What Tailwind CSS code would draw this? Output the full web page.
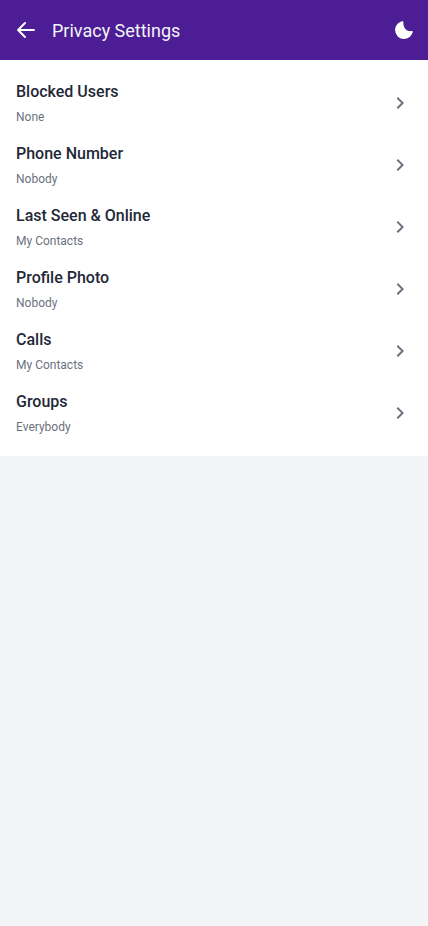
<!DOCTYPE html>
<html lang="en">
<head>
<meta charset="utf-8">
<meta name="viewport" content="width=device-width, initial-scale=1">
<title>Privacy Settings</title>
<script src="https://cdn.jsdelivr.net/npm/@tailwindcss/browser@4"></script>
</head>
<body class="min-h-screen bg-[#f3f4f6] font-['Roboto',sans-serif]">
<header class="flex h-[60px] items-center justify-between bg-[#4c1d95] pl-3.5 pr-3 text-white">
  <div class="flex items-center gap-3.5">
    <button aria-label="Back"><svg class="size-6" viewBox="0 0 24 24" fill="none" stroke="currentColor" stroke-width="2" stroke-linecap="round" stroke-linejoin="round"><path d="M20 12H4M11 5l-7 7 7 7"/></svg></button>
    <h1 class="pt-0.5 text-lg text-[#f3f4f6]">Privacy Settings</h1>
  </div>
  <button aria-label="Dark mode"><svg class="size-6" viewBox="0 0 24 24" fill="currentColor"><path d="M10.200 3.250C6 4.150 3.100 7.800 3.100 12.100a8.900 8.900 0 0 0 8.900 8.900c4.200 0 7.700-2.800 8.700-6.900.150-.700-.350-1.150-1-1-2.200.400-4.200-.100-5.800-1.600-1.900-1.800-2.800-4.300-2.500-7.200.100-.700-.400-1.200-1.200-1.050z"/></svg></button>
</header>
<main class="bg-white pt-3 pb-3">
  <ul>
    <li class="flex h-[62px] items-center justify-between px-4"><div class="pb-px"><h2 class="text-base font-medium text-[#1f2937]">Blocked Users</h2><p class="mt-[5px] text-xs text-[#6b7280]">None</p></div><svg class="size-6 text-[#6b7280]" viewBox="0 0 24 24" fill="currentColor"><path d="M10 6 8.590 7.410 13.170 12l-4.580 4.590L10 18l6-6z"/></svg></li>
    <li class="flex h-[62px] items-center justify-between px-4"><div class="pb-px"><h2 class="text-base font-medium text-[#1f2937]">Phone Number</h2><p class="mt-[5px] text-xs text-[#6b7280]">Nobody</p></div><svg class="size-6 text-[#6b7280]" viewBox="0 0 24 24" fill="currentColor"><path d="M10 6 8.590 7.410 13.170 12l-4.580 4.590L10 18l6-6z"/></svg></li>
    <li class="flex h-[62px] items-center justify-between px-4"><div class="pb-px"><h2 class="text-base font-medium text-[#1f2937]">Last Seen &amp; Online</h2><p class="mt-[5px] text-xs text-[#6b7280]">My Contacts</p></div><svg class="size-6 text-[#6b7280]" viewBox="0 0 24 24" fill="currentColor"><path d="M10 6 8.590 7.410 13.170 12l-4.580 4.590L10 18l6-6z"/></svg></li>
    <li class="flex h-[62px] items-center justify-between px-4"><div class="pb-px"><h2 class="text-base font-medium text-[#1f2937]">Profile Photo</h2><p class="mt-[5px] text-xs text-[#6b7280]">Nobody</p></div><svg class="size-6 text-[#6b7280]" viewBox="0 0 24 24" fill="currentColor"><path d="M10 6 8.590 7.410 13.170 12l-4.580 4.590L10 18l6-6z"/></svg></li>
    <li class="flex h-[62px] items-center justify-between px-4"><div class="pb-px"><h2 class="text-base font-medium text-[#1f2937]">Calls</h2><p class="mt-[5px] text-xs text-[#6b7280]">My Contacts</p></div><svg class="size-6 text-[#6b7280]" viewBox="0 0 24 24" fill="currentColor"><path d="M10 6 8.590 7.410 13.170 12l-4.580 4.590L10 18l6-6z"/></svg></li>
    <li class="flex h-[62px] items-center justify-between px-4"><div class="pb-px"><h2 class="text-base font-medium text-[#1f2937]">Groups</h2><p class="mt-[5px] text-xs text-[#6b7280]">Everybody</p></div><svg class="size-6 text-[#6b7280]" viewBox="0 0 24 24" fill="currentColor"><path d="M10 6 8.590 7.410 13.170 12l-4.580 4.590L10 18l6-6z"/></svg></li>
  </ul>
</main>
</body>
</html>
